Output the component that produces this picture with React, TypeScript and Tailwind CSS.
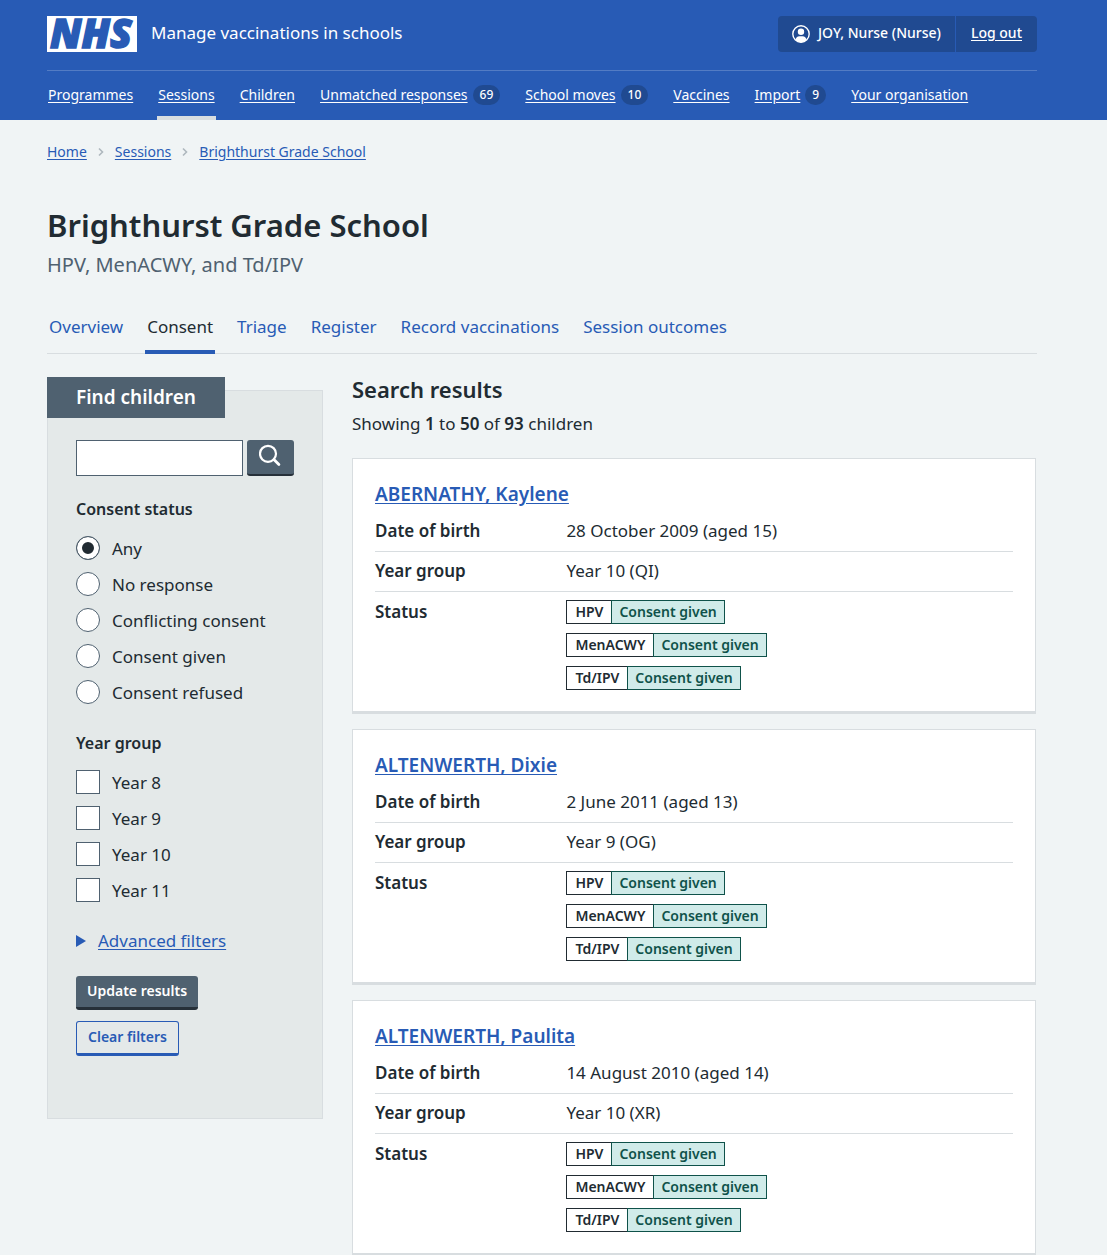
import React from "react";

const navItems = [
  { label: "Programmes" },
  { label: "Sessions", current: true },
  { label: "Children" },
  { label: "Unmatched responses", count: 69 },
  { label: "School moves", count: 10 },
  { label: "Vaccines" },
  { label: "Import", count: 9 },
  { label: "Your organisation" },
];

const tabs = ["Overview", "Consent", "Triage", "Register", "Record vaccinations", "Session outcomes"];

const consentOptions = ["Any", "No response", "Conflicting consent", "Consent given", "Consent refused"];

const yearOptions = ["Year 8", "Year 9", "Year 10", "Year 11"];

const programmes = ["HPV", "MenACWY", "Td/IPV"];

const children = [
  { name: "ABERNATHY, Kaylene", dob: "28 October 2009 (aged 15)", year: "Year 10 (QI)" },
  { name: "ALTENWERTH, Dixie", dob: "2 June 2011 (aged 13)", year: "Year 9 (OG)" },
  { name: "ALTENWERTH, Paulita", dob: "14 August 2010 (aged 14)", year: "Year 10 (XR)" },
];

function Logo() {
  return (
    <svg width="90" height="36" viewBox="0 0 90 36" role="img" aria-label="NHS" className="shrink-0 overflow-visible">
      <rect width="90" height="36" fill="#fff" />
      <text
        x="44"
        y="32"
        textAnchor="middle"
        fill="#285bb5"
        stroke="#285bb5"
        strokeWidth="1.4"
        fontFamily="'Open Sans', 'Noto Sans', sans-serif"
        fontSize="40"
        fontWeight="800"
        fontStyle="italic"
      >
        NHS
      </text>
    </svg>
  );
}

function Header() {
  return (
    <header className="bg-[#285bb5] text-white">
      <div className="ml-[47px] mr-[70px]">
        <div className="flex items-center justify-between pt-4 pb-[18px]">
          <a href="#" className="flex items-center gap-3.5">
            <Logo />
            <span className="pb-0.5 text-[17px] leading-6">Manage vaccinations in schools</span>
          </a>
          <div className="flex h-9 items-stretch overflow-hidden rounded bg-[#204a91] text-sm font-medium">
            <div className="flex items-center gap-2 border-r border-[#285bb5] px-3.5">
              <svg width="18" height="18" viewBox="0 0 18 18" aria-hidden="true">
                <circle cx="9" cy="9" r="8.2" fill="none" stroke="#fff" strokeWidth="1.4" />
                <circle cx="9" cy="6.8" r="3.2" fill="#fff" />
                <path d="M3.6 15.2c0-2.8 1.8-4 3.8-4h3.2c2 0 3.8 1.2 3.8 4A8.4 8.4 0 0 1 9 17.4a8.4 8.4 0 0 1-5.4-2.2z" fill="#fff" />
              </svg>
              <span className="pb-0.5">JOY, Nurse (Nurse)</span>
            </div>
            <a href="#" className="flex items-center px-[15px] pb-0.5 underline underline-offset-2">
              Log out
            </a>
          </div>
        </div>
        <nav aria-label="Primary" className="border-t border-[#537cc4]">
          <ul className="flex h-[49px] gap-[23px] text-sm">
            {navItems.map((item) => (
              <li
                key={item.label}
                className={
                  item.current
                    ? "flex items-center border-b-4 border-[#d8dde0] px-px pt-0.5"
                    : "flex items-center px-px pb-0.5"
                }
              >
                <a href="#" aria-current={item.current ? "page" : undefined} className="flex items-center gap-[5px]">
                  <span className="underline underline-offset-2">{item.label}</span>
                  {item.count !== undefined && (
                    <span className="rounded-full bg-[#204a91] px-[7px] text-xs leading-5 font-medium">{item.count}</span>
                  )}
                </a>
              </li>
            ))}
          </ul>
        </nav>
      </div>
    </header>
  );
}

function Breadcrumbs() {
  const crumbs = ["Home", "Sessions", "Brighthurst Grade School"];
  return (
    <nav aria-label="Breadcrumb" className="pt-5">
      <ol className="flex items-center text-sm leading-6">
        {crumbs.map((crumb, i) => (
          <li key={crumb} className="flex items-center">
            {i > 0 && (
              <svg width="6" height="10" viewBox="0 0 6 10" fill="none" aria-hidden="true" className="mx-[11px]">
                <path d="M1 1.5 4.5 5 1 8.5" stroke="#aeb7bd" strokeWidth="1.6" />
              </svg>
            )}
            <a href="#" className="text-[#285bb5] underline underline-offset-2">
              {crumb}
            </a>
          </li>
        ))}
      </ol>
    </nav>
  );
}

function Tabs() {
  return (
    <nav aria-label="Session" className="mt-8 border-b border-[#d8dde0]">
      <ul className="-mb-px flex h-[43px] gap-5">
        {tabs.map((tab) => (
          <li
            key={tab}
            className={
              tab === "Consent"
                ? "border-b-4 border-[#285bb5] px-0.5 pt-[3px] text-[#212b32]"
                : "px-0.5 pt-[3px] text-[#285bb5]"
            }
          >
            <a href="#" aria-current={tab === "Consent" ? "page" : undefined} className="leading-6">
              {tab}
            </a>
          </li>
        ))}
      </ul>
    </nav>
  );
}

function Filters() {
  return (
    <aside className="w-[276px] shrink-0 pt-[13px]">
      <form
        className="border border-[#d8dde0] bg-[#e4e9e9] px-7 pb-[62px]"
        onSubmit={(event) => event.preventDefault()}
      >
        <h2 className="-mt-3.5 -ml-[29px] w-fit bg-[#4f6170] px-[29px] text-[19px] leading-[41px] font-semibold text-white">
          Find children
        </h2>
        <div className="mt-[22px] flex gap-1">
          <input
            type="search"
            aria-label="Search"
            className="h-9 w-0 flex-1 appearance-none border border-[#4f6170] bg-white px-2"
          />
          <button
            type="submit"
            aria-label="Search"
            className="flex h-9 w-[47px] justify-center rounded-[3px] border-b-2 border-[#263039] bg-[#4f6170] pt-1"
          >
            <svg width="24" height="24" viewBox="0 0 24 24" fill="none" stroke="#fff" aria-hidden="true">
              <circle cx="9" cy="9.8" r="8" strokeWidth="2.2" />
              <path d="m14.9 15.6 5 5" strokeWidth="2.8" strokeLinecap="round" />
            </svg>
          </button>
        </div>

        <fieldset className="mt-[21px]">
          <legend className="text-base leading-6 font-semibold">Consent status</legend>
          <div className="mt-[15px] flex flex-col gap-2.5">
            {consentOptions.map((option, i) => (
              <label key={option} className="flex items-start gap-3 leading-[26px]">
                <input
                  type="radio"
                  name="consent"
                  defaultChecked={i === 0}
                  className="size-6 shrink-0 appearance-none rounded-full border border-[#4f6170] bg-white checked:bg-[#212b32] checked:shadow-[inset_0_0_0_5px_white]"
                />
                {option}
              </label>
            ))}
          </div>
        </fieldset>

        <fieldset className="mt-[25px]">
          <legend className="text-base leading-6 font-semibold">Year group</legend>
          <div className="mt-[15px] flex flex-col gap-2.5">
            {yearOptions.map((option) => (
              <label key={option} className="flex items-start gap-3 leading-[26px]">
                <input
                  type="checkbox"
                  name="year"
                  className="size-6 shrink-0 appearance-none border border-[#4f6170] bg-white checked:bg-[#4f6170]"
                />
                {option}
              </label>
            ))}
          </div>
        </fieldset>

        <details className="mt-[25px]">
          <summary className="flex list-none items-center gap-3 leading-6 text-[#285bb5]">
            <svg width="10" height="12" viewBox="0 0 10 12" aria-hidden="true">
              <path d="M0 0v12l10-6z" fill="#285bb5" />
            </svg>
            <span className="underline underline-offset-2">Advanced filters</span>
          </summary>
        </details>

        <div className="mt-[23px] flex flex-col items-start gap-[11px] text-sm font-semibold">
          <button
            type="submit"
            className="rounded-[3px] border-b-3 border-[#263039] bg-[#4f6170] px-[11px] pt-[5px] pb-1.5 leading-5 text-white"
          >
            Update results
          </button>
          <button
            type="reset"
            className="rounded-[3px] border border-b-3 border-[#285bb5] px-[11px] pt-[5px] pb-1.5 leading-5 text-[#285bb5]"
          >
            Clear filters
          </button>
        </div>
      </form>
    </aside>
  );
}

function StatusTag({ programme }: { programme: string }) {
  return (
    <li className="flex h-6 text-sm leading-[22px] font-semibold">
      <span className="border border-[#212b32] bg-white px-2">{programme}</span>
      <span className="-ml-px border border-[#0f524a] bg-[#d0ebe9] px-[7px] text-[#0f524a]">Consent given</span>
    </li>
  );
}

function ChildCard({ name, dob, year }: { name: string; dob: string; year: string }) {
  return (
    <article className="border border-b-3 border-[#d8dde0] bg-white px-[22px] pt-[21px] pb-[21px]">
      <h3 className="text-[19px] leading-7 font-semibold">
        <a href="#" className="text-[#285bb5] underline underline-offset-2">
          {name}
        </a>
      </h3>
      <dl className="mt-[3px] leading-6">
        <div className="flex border-b border-[#d8dde0] py-2">
          <dt className="w-[30%] font-semibold">Date of birth</dt>
          <dd>{dob}</dd>
        </div>
        <div className="flex border-b border-[#d8dde0] pt-[7px] pb-2">
          <dt className="w-[30%] font-semibold">Year group</dt>
          <dd>{year}</dd>
        </div>
        <div className="flex pt-2">
          <dt className="w-[30%] font-semibold">Status</dt>
          <dd>
            <ul className="flex flex-col gap-[9px]">
              {programmes.map((programme) => (
                <StatusTag key={programme} programme={programme} />
              ))}
            </ul>
          </dd>
        </div>
      </dl>
    </article>
  );
}

export default function App() {
  return (
    <div className="min-h-screen bg-[#f0f4f5] font-['Noto_Sans','Open_Sans',sans-serif] text-[17px] text-[#212b32]">
      <Header />
      <div className="ml-[47px] mr-[70px]">
        <Breadcrumbs />
        <main className="pt-[41px]">
          <h1 className="text-[31px] leading-10 font-semibold">Brighthurst Grade School</h1>
          <p className="mt-1.5 text-xl leading-7 text-[#4f6170]">HPV, MenACWY, and Td/IPV</p>
          <Tabs />
          <div className="mt-[23px] flex items-start gap-[29px]">
            <Filters />
            <section className="min-w-0 flex-1 pr-px">
              <h2 className="text-[22px] leading-6 font-semibold">Search results</h2>
              <p className="mt-[11px] leading-6">
                Showing <b className="font-semibold">1</b> to <b className="font-semibold">50</b> of{" "}
                <b className="font-semibold">93</b> children
              </p>
              <div className="mt-[22px] flex flex-col gap-[15px]">
                {children.map((child) => (
                  <ChildCard key={child.name} {...child} />
                ))}
              </div>
            </section>
          </div>
        </main>
      </div>
    </div>
  );
}
